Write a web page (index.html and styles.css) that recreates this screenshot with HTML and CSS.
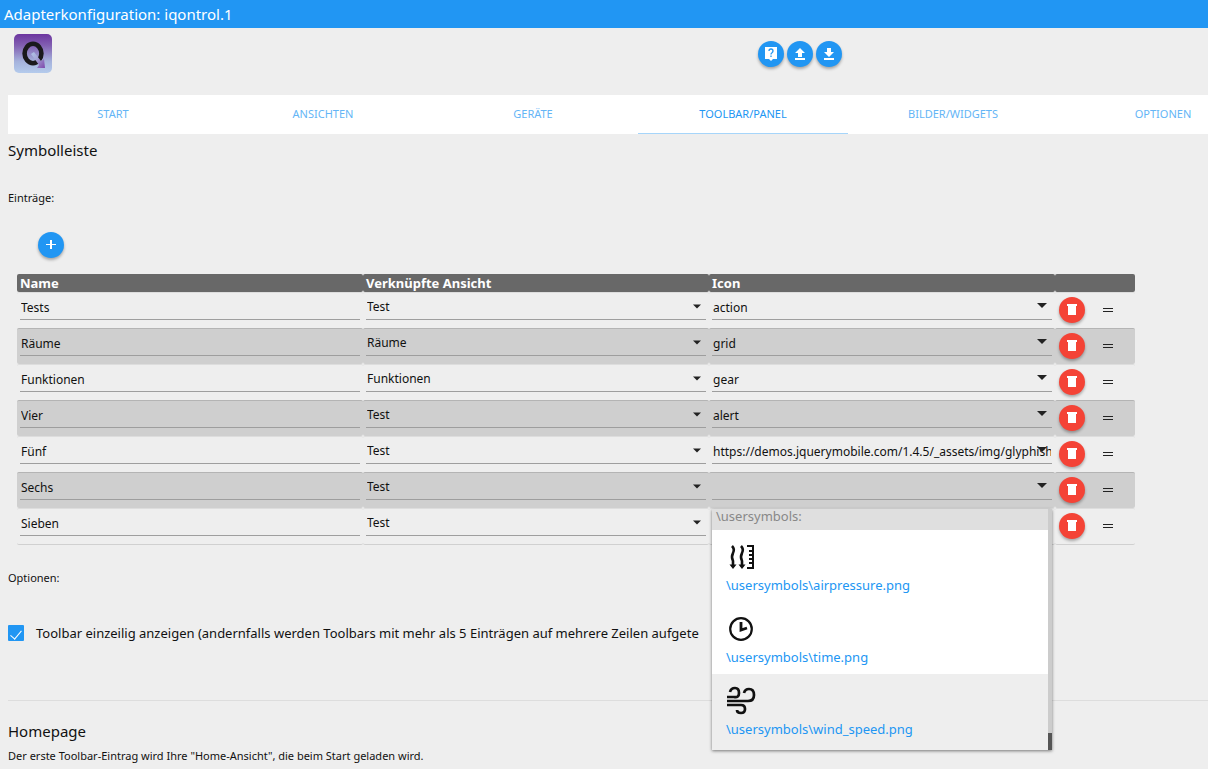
FILE: index.html
```html
<!DOCTYPE html>
<html lang="de">
<head>
<meta charset="utf-8">
<title>Adapterkonfiguration: iqontrol.1</title>
<link rel="stylesheet" href="styles.css">
</head>
<body>
<svg class="sprite" aria-hidden="true">
  <symbol id="trash" viewBox="0 0 26 26"><path d="M8 7h10v2H8zM9 8h8v10H9z" fill="#fff"/></symbol>
  <symbol id="arrow" viewBox="0 0 10 5"><path d="M0 0h10L5 5z" fill="#222"/></symbol>
  <symbol id="drag" viewBox="0 0 10 5"><path d="M0 0h10v1H0zM0 3h10v1H0z" fill="#222"/></symbol>
</svg>

<header class="titlebar">Adapterkonfiguration: iqontrol.1</header>

<div class="toolbar">
  <div class="brand">
    <svg class="logo" viewBox="0 0 38 39" role="img" aria-label="iQontrol">
      <defs>
        <linearGradient id="bg" x1="0" y1="0" x2="0" y2="1"><stop offset="0" stop-color="#6c359f"/><stop offset=".3" stop-color="#8260b2"/><stop offset=".7" stop-color="#a5b2dc"/><stop offset="1" stop-color="#b4cbec"/></linearGradient>
        <linearGradient id="ar" x1="0" y1="0" x2="1" y2="1"><stop offset="0" stop-color="#b0c6e8"/><stop offset=".4" stop-color="#a5a5d6"/><stop offset="1" stop-color="#7d45aa"/></linearGradient>
      </defs>
      <rect width="38" height="39" rx="5" fill="url(#bg)"/>
      <ellipse cx="19" cy="19.500" rx="8.400" ry="9.700" fill="none" stroke="#1a191c" stroke-width="4.600"/>
      <path d="M17 20l3-2 7 9 3-2 1 9h-8l2-3z" fill="url(#ar)"/>
    </svg>
  </div>
  <button class="round" type="button" aria-label="Hilfe"><svg viewBox="0 0 26 26"><path d="M7 6h12v12h-4l-2 2-2-2H7z" fill="#fff"/><path d="M11 10q0-2 2-2t2 2q0 1-1 1.700-1 .6-1 1.800M13 14.500v1.500" fill="none" stroke="#2196f3" stroke-width="1.300"/></svg></button>
  <button class="round" type="button" aria-label="Hochladen"><svg viewBox="0 0 26 26"><path d="M13 7l5 5h-3v4h-4v-4H8zM8 17h10v2H8z" fill="#fff"/></svg></button>
  <button class="round" type="button" aria-label="Herunterladen"><svg viewBox="0 0 26 26"><path d="M11 7h4v4h3l-5 5-5-5h3zM8 17h10v2H8z" fill="#fff"/></svg></button>
</div>

<nav class="tabs">
  <a href="#start">START</a>
  <a href="#ansichten">ANSICHTEN</a>
  <a href="#geraete">GERÄTE</a>
  <a href="#toolbar" class="active">TOOLBAR/PANEL</a>
  <a href="#bilder">BILDER/WIDGETS</a>
  <a href="#optionen">OPTIONEN</a>
</nav>

<main>
  <h1>Symbolleiste</h1>
  <p class="label">Einträge:</p>
  <button class="round add" type="button" aria-label="Hinzufügen"><svg viewBox="0 0 26 26"><path d="M8 12h4V8h2v4h4v1h-4v4h-2v-4H8z" fill="#fff"/></svg></button>

  <table class="entries">
    <thead>
      <tr><th>Name</th><th>Verknüpfte Ansicht</th><th>Icon</th><th class="actions"></th></tr>
    </thead>
    <tbody>
      <tr>
        <td><input type="text" aria-label="Name" value="Tests"></td>
        <td><div class="field"><select aria-label="Verknüpfte Ansicht"><option>Test</option></select><svg class="caret"><use href="#arrow"/></svg></div></td>
        <td><div class="field combo"><input type="text" aria-label="Icon" value="action"><svg class="caret"><use href="#arrow"/></svg></div></td>
        <td><div class="tools"><button class="round red" type="button" aria-label="Löschen"><svg><use href="#trash"/></svg></button><svg class="drag"><use href="#drag"/></svg></div></td>
      </tr>
      <tr>
        <td><input type="text" aria-label="Name" value="Räume"></td>
        <td><div class="field"><select aria-label="Verknüpfte Ansicht"><option>Räume</option></select><svg class="caret"><use href="#arrow"/></svg></div></td>
        <td><div class="field combo"><input type="text" aria-label="Icon" value="grid"><svg class="caret"><use href="#arrow"/></svg></div></td>
        <td><div class="tools"><button class="round red" type="button" aria-label="Löschen"><svg><use href="#trash"/></svg></button><svg class="drag"><use href="#drag"/></svg></div></td>
      </tr>
      <tr>
        <td><input type="text" aria-label="Name" value="Funktionen"></td>
        <td><div class="field"><select aria-label="Verknüpfte Ansicht"><option>Funktionen</option></select><svg class="caret"><use href="#arrow"/></svg></div></td>
        <td><div class="field combo"><input type="text" aria-label="Icon" value="gear"><svg class="caret"><use href="#arrow"/></svg></div></td>
        <td><div class="tools"><button class="round red" type="button" aria-label="Löschen"><svg><use href="#trash"/></svg></button><svg class="drag"><use href="#drag"/></svg></div></td>
      </tr>
      <tr>
        <td><input type="text" aria-label="Name" value="Vier"></td>
        <td><div class="field"><select aria-label="Verknüpfte Ansicht"><option>Test</option></select><svg class="caret"><use href="#arrow"/></svg></div></td>
        <td><div class="field combo"><input type="text" aria-label="Icon" value="alert"><svg class="caret"><use href="#arrow"/></svg></div></td>
        <td><div class="tools"><button class="round red" type="button" aria-label="Löschen"><svg><use href="#trash"/></svg></button><svg class="drag"><use href="#drag"/></svg></div></td>
      </tr>
      <tr>
        <td><input type="text" aria-label="Name" value="Fünf"></td>
        <td><div class="field"><select aria-label="Verknüpfte Ansicht"><option>Test</option></select><svg class="caret"><use href="#arrow"/></svg></div></td>
        <td><div class="field combo"><input type="text" aria-label="Icon" value="https://demos.jquerymobile.com/1.4.5/_assets/img/glyphish"><svg class="caret"><use href="#arrow"/></svg></div></td>
        <td><div class="tools"><button class="round red" type="button" aria-label="Löschen"><svg><use href="#trash"/></svg></button><svg class="drag"><use href="#drag"/></svg></div></td>
      </tr>
      <tr>
        <td><input type="text" aria-label="Name" value="Sechs"></td>
        <td><div class="field"><select aria-label="Verknüpfte Ansicht"><option>Test</option></select><svg class="caret"><use href="#arrow"/></svg></div></td>
        <td>
          <div class="field combo"><input type="text" aria-label="Icon" value=""><svg class="caret"><use href="#arrow"/></svg>
            <div class="menu">
              <div class="list">
                <div class="group">\usersymbols:</div>
                <a class="item" href="#airpressure">
                  <svg viewBox="0 0 30 30" fill="none" stroke="#111" stroke-width="2"><path d="M6 4q3 3 1 7t0 8v6M15 4q3 3 1 7t0 8v6" stroke-width="2.600"/><path d="M3.500 22.500L7 27l3.500-4.500zM12.500 22.500L16 27l3.500-4.500z" fill="#111" stroke="none"/><path d="M21 4h6v22h-6M23 9h4M23 13h4M23 17h4M23 21h4"/></svg>
                  <span>\usersymbols\airpressure.png</span>
                </a>
                <a class="item" href="#time">
                  <svg viewBox="0 0 30 30" fill="none" stroke="#111"><circle cx="15" cy="15" r="10.800" stroke-width="2.200"/><path d="M15 8v8l6-2" stroke-width="2.800"/></svg>
                  <span>\usersymbols\time.png</span>
                </a>
                <a class="item selected" href="#wind_speed">
                  <svg viewBox="0 0 30 30" fill="none" stroke="#111" stroke-width="2.700"><path d="M4 6q1-4 5-4 4 0 4 5t-5 4H1M18 7q1-4 5-4 5 0 5 6t-6 6H1M1 19h14q4 0 4 4t-4 4q-4 0-4-3"/></svg>
                  <span>\usersymbols\wind_speed.png</span>
                </a>
              </div>
              <div class="track"><div class="thumb"></div></div>
            </div>
          </div>
        </td>
        <td><div class="tools"><button class="round red" type="button" aria-label="Löschen"><svg><use href="#trash"/></svg></button><svg class="drag"><use href="#drag"/></svg></div></td>
      </tr>
      <tr>
        <td><input type="text" aria-label="Name" value="Sieben"></td>
        <td><div class="field"><select aria-label="Verknüpfte Ansicht"><option>Test</option></select><svg class="caret"><use href="#arrow"/></svg></div></td>
        <td><div class="field combo"><input type="text" aria-label="Icon" value=""></div></td>
        <td><div class="tools"><button class="round red" type="button" aria-label="Löschen"><svg><use href="#trash"/></svg></button><svg class="drag"><use href="#drag"/></svg></div></td>
      </tr>
    </tbody>
  </table>

  <p class="label options">Optionen:</p>
  <label class="check"><input type="checkbox" checked><span>Toolbar einzeilig anzeigen (andernfalls werden Toolbars mit mehr als 5 Einträgen auf mehrere Zeilen aufgete</span></label>
  <hr>
  <h2>Homepage</h2>
  <p class="label">Der erste Toolbar-Eintrag wird Ihre "Home-Ansicht", die beim Start geladen wird.</p>
</main>
</body>
</html>
```
FILE: styles.css
```css
* { box-sizing: border-box; }
html { overflow: hidden; background: #eee; }
body {
  margin: 0;
  color: #111;
  font-family: "Noto Sans", "Open Sans", sans-serif;
  font-size: 12px;
}
.sprite { display: none; }
svg { display: block; }

.titlebar {
  padding: 0 4px;
  background: #2196f3;
  color: #fff;
  font-size: 15px;
  line-height: 28px;
}

.toolbar { display: flex; gap: 3px; padding-bottom: 22px; }
.brand { width: 62.5%; padding: 6px 0 0 14px; }
.logo { width: 38px; height: 39px; }
.toolbar .round { margin-top: 13px; }

.round {
  flex: none;
  width: 26px;
  height: 26px;
  padding: 0;
  border: 0;
  border-radius: 50%;
  background: #2196f3;
  box-shadow: 0 2px 3px rgba(0, 0, 0, .3);
}
.round svg { width: 26px; height: 26px; }
.red { background: #f44336; }

.tabs {
  display: flex;
  height: 39px;
  margin-left: 8px;
  background: #fff;
}
.tabs a {
  flex: 0 0 17.5%;
  border-bottom: 1px solid transparent;
  color: #64b5f6;
  font-size: 11px;
  line-height: 38px;
  text-align: center;
  text-decoration: none;
}
.tabs .active { color: #2196f3; border-color: #a6d5fa; }

main { padding-left: 8px; }
h1, h2 { margin: 0; font-size: 15px; font-weight: 400; line-height: 20px; }
h1 { padding-top: 6px; }
.label { margin: 0; font-size: 11px; line-height: 16px; }
h1 + .label { margin-top: 30px; }
.add { display: block; margin: 26px 0 0 30px; }

.entries {
  width: calc(100% - 82px);
  margin: 16px 0 0 9px;
  table-layout: fixed;
  border-collapse: separate;
  border-spacing: 0;
}
.entries th {
  height: 18px;
  padding: 0 3px;
  background: #686868;
  border-radius: 2px;
  color: #fff;
  font-size: 13px;
  line-height: 18px;
  text-align: left;
}
.entries .actions { width: 80px; }
.entries td {
  height: 36px;
  padding: 2px 3px 5px;
  border-top: 1px solid #ddd;
  border-radius: 2px;
  vertical-align: top;
}
.entries tr:nth-child(even) td { background: #cfcfcf; border-top-color: #b4b4b4; }
.entries tr:last-child td { height: 37px; border-bottom: 1px solid #d0d0d0; }

.entries input, .entries select {
  display: block;
  width: 100%;
  height: 25px;
  margin: 0;
  padding: 0 1px;
  border: 0;
  border-bottom: 1px solid #9e9e9e;
  border-radius: 0;
  outline: 0;
  background: transparent;
  color: #111;
  font: 12px "Noto Sans", "Open Sans", sans-serif;
  appearance: none;
}
.entries select { padding-bottom: 2px; }
.field { position: relative; }
.caret {
  position: absolute;
  top: 9px;
  right: 5px;
  width: 8px;
  height: 5px;
  pointer-events: none;
}
.combo .caret { top: 8px; width: 10px; }
.tools { display: flex; align-items: center; gap: 18px; padding: 2px 1px 0; }
.drag { width: 10px; height: 5px; }

.menu {
  position: absolute;
  z-index: 2;
  top: 34px;
  left: 0;
  display: flex;
  width: 100%;
  background: #fff;
  box-shadow: 0 1px 3px rgba(0, 0, 0, .5);
}
.list { flex: 1; }
.group {
  height: 21px;
  padding: 0 4px;
  background: #dfdfdf;
  color: #888;
  font-size: 13px;
  line-height: 14px;
}
.item {
  display: block;
  height: 72px;
  padding: 12px 14px 0;
  color: #2196f3;
  font-size: 13px;
  line-height: 18px;
  text-decoration: none;
}
.item svg { width: 30px; height: 30px; margin-bottom: 4px; }
.selected { height: 76px; background: #eee; }
.track { display: flex; align-items: flex-end; width: 4px; background: #ccc; }
.thumb { width: 4px; height: 17px; background: #555; }

.options { margin-top: 25px; }
.check { display: flex; align-items: center; gap: 12px; margin-top: 36px; font-size: 13px; line-height: 22px; }
.check input {
  flex: none;
  display: grid;
  place-items: center;
  width: 16px;
  height: 16px;
  margin: 0;
  border-radius: 1px;
  background: #2196f3;
  appearance: none;
}
.check input:checked::after {
  content: "";
  width: 5px;
  height: 10px;
  border: solid #fff;
  border-width: 0 1px 1px 0;
  transform: rotate(40deg);
}
hr { margin: 56px 0 20px; border: 0; border-top: 1px solid #ddd; }
h2 + .label { margin-top: 7px; }
```
